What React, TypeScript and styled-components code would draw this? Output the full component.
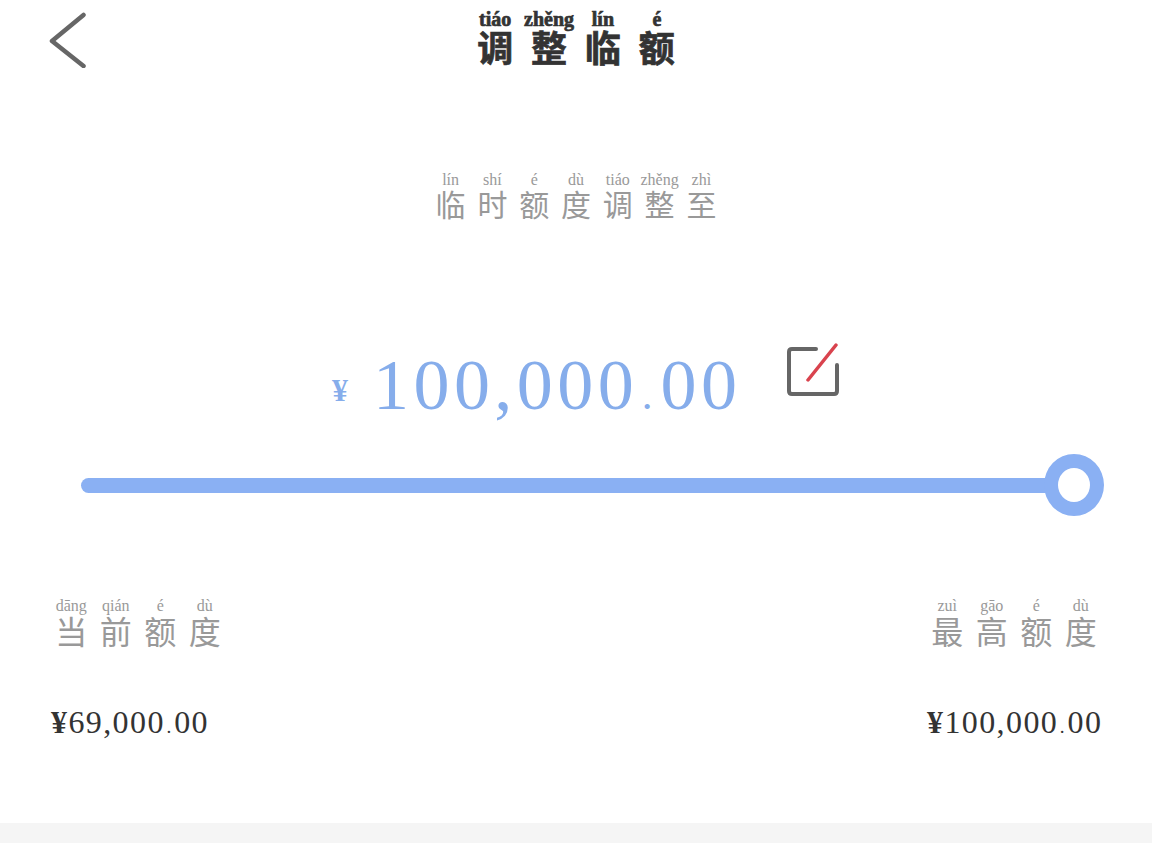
import React from 'react';
import styled, { createGlobalStyle } from 'styled-components';

const GlobalStyle = createGlobalStyle`
  html, body {
    margin: 0;
    padding: 0;
    background: #fff;
  }
`;

const Page = styled.div`
  width: 1152px;
  height: 843px;
  display: flex;
  flex-direction: column;
  overflow: hidden;
  font-family: "Liberation Serif", "Noto Sans CJK SC", serif;
`;

const Content = styled.div`
  height: 823px;
  flex: none;
  display: flex;
  flex-direction: column;
`;

const Footer = styled.div`
  flex: 1;
  background: #f5f5f5;
`;

const Header = styled.div`
  display: grid;
  grid-template-columns: 1fr auto 1fr;
  align-items: start;
  padding: 10px 48px 0;
  height: 160px;
  box-sizing: border-box;
`;

const BackIcon = styled.svg`
  width: 40px;
  height: 58px;
  display: block;
`;

interface RowProps {
  $pitch: number;
  $color: string;
  $pySize: number;
  $pyHeight: number;
  $hzSize: number;
  $bold?: boolean;
}

const PinyinRow = styled.div<RowProps>`
  display: grid;
  grid-auto-flow: column;
  grid-auto-columns: ${p => p.$pitch}px;
  justify-content: start;
  color: ${p => p.$color};
  font-weight: ${p => (p.$bold ? 700 : 400)};
  -webkit-text-stroke: ${p => (p.$bold ? '0.7px' : '0')} ${p => p.$color};
  --py-size: ${p => p.$pySize}px;
  --py-height: ${p => p.$pyHeight}px;
  --hz-size: ${p => p.$hzSize}px;
`;

const Syllable = styled.div`
  display: flex;
  flex-direction: column;
  align-items: center;
`;

const Pinyin = styled.span`
  font-size: var(--py-size);
  line-height: var(--py-height);
  height: var(--py-height);
  white-space: nowrap;
`;

const Hanzi = styled.span`
  font-size: var(--hz-size);
  line-height: var(--hz-size);
  font-family: "Noto Sans CJK SC", sans-serif;
`;

const SubtitleRow = styled.div`
  display: flex;
  justify-content: center;
  height: 160px;
  padding-top: 11px;
  box-sizing: border-box;
`;

const AmountRow = styled.div`
  height: 134px;
  display: flex;
  align-items: flex-start;
  padding-left: 332px;
  box-sizing: border-box;
`;

const Currency = styled.span`
  font-size: 32px;
  line-height: 36px;
  margin-top: 52px;
  width: 41px;
  color: #86adeb;
  font-weight: 700;
`;

const Amount = styled.span`
  font-size: 72px;
  line-height: 82px;
  letter-spacing: 4.45px;
  margin-top: 24px;
  color: #86adeb;
`;

// the decimal point is drawn smaller than the digits
const Dot = styled.span`
  font-size: 0.6em;
  padding: 0 0.083em;
`;

const EditIcon = styled.svg`
  width: 56px;
  height: 56px;
  margin: 23px 0 0 44px;
  display: block;
`;

const Slider = styled.div`
  display: flex;
  align-items: center;
  padding: 0 48px 0 81px;
  height: 62px;
`;

const Track = styled.div`
  flex: 1;
  height: 15px;
  margin-right: -4px;
  border-radius: 8px 0 0 8px;
  background: #8ab0f3;
`;

const Thumb = styled.div`
  width: 60px;
  height: 62px;
  box-sizing: border-box;
  border: 14px solid #8ab0f3;
  border-radius: 50%;
  background: #fff;
`;

const Summary = styled.div`
  display: flex;
  justify-content: space-between;
  padding: 82px 49px 0 51px;
`;

const SummaryColumn = styled.div`
  display: flex;
  flex-direction: column;
`;

const LabelWrap = styled.div`
  margin-left: -2px;
  height: 106px;
`;

const Money = styled.div`
  font-size: 32px;
  line-height: 36px;
  letter-spacing: 1.4px;
  color: #333;
`;

const Yen = styled.span`
  font-weight: 700;
`;

type Char = [string, string];

const TITLE: Char[] = [['tiáo', '调'], ['zhěng', '整'], ['lín', '临'], ['é', '额']];
const SUBTITLE: Char[] = [['lín', '临'], ['shí', '时'], ['é', '额'], ['dù', '度'], ['tiáo', '调'], ['zhěng', '整'], ['zhì', '至']];
const CURRENT: Char[] = [['dāng', '当'], ['qián', '前'], ['é', '额'], ['dù', '度']];
const MAX: Char[] = [['zuì', '最'], ['gāo', '高'], ['é', '额'], ['dù', '度']];

const renderChars = (chars: Char[]) =>
  chars.map(([py, hz], i) => (
    <Syllable key={i}>
      <Pinyin>{py}</Pinyin>
      <Hanzi>{hz}</Hanzi>
    </Syllable>
  ));

const App: React.FC = () => (
  <Page>
    <GlobalStyle />
    <Content>
      <Header>
        <BackIcon viewBox="0 0 40 58">
          <path d="M35.5 5 L4 31 L35.5 56" fill="none" stroke="#666" strokeWidth="4.5" strokeLinecap="round" strokeLinejoin="round" />
        </BackIcon>
        <PinyinRow $pitch={53.9} $color="#333" $pySize={20} $pyHeight={18} $hzSize={36} $bold>
          {renderChars(TITLE)}
        </PinyinRow>
        <div />
      </Header>
      <SubtitleRow>
        <PinyinRow $pitch={41.8} $color="#999" $pySize={16} $pyHeight={17} $hzSize={30}>
          {renderChars(SUBTITLE)}
        </PinyinRow>
      </SubtitleRow>
      <AmountRow>
        <Currency>¥</Currency>
        <Amount>100,000<Dot>.</Dot>00</Amount>
        <EditIcon viewBox="0 0 56 56">
          <path d="M31 6 H7 Q4 6 4 9 V48 Q4 51 7 51 H49 Q52 51 52 48 V22" fill="none" stroke="#666" strokeWidth="4" strokeLinecap="round" />
          <path d="M23 37 L51 2" fill="none" stroke="#d9434e" strokeWidth="3.5" strokeLinecap="round" />
        </EditIcon>
      </AmountRow>
      <Slider>
        <Track />
        <Thumb />
      </Slider>
      <Summary>
        <SummaryColumn>
          <LabelWrap>
            <PinyinRow $pitch={44.5} $color="#999" $pySize={16} $pyHeight={16} $hzSize={32}>
              {renderChars(CURRENT)}
            </PinyinRow>
          </LabelWrap>
          <Money><Yen>¥</Yen>69,000<Dot>.</Dot>00</Money>
        </SummaryColumn>
        <SummaryColumn>
          <LabelWrap>
            <PinyinRow $pitch={44.5} $color="#999" $pySize={16} $pyHeight={16} $hzSize={32}>
              {renderChars(MAX)}
            </PinyinRow>
          </LabelWrap>
          <Money><Yen>¥</Yen>100,000<Dot>.</Dot>00</Money>
        </SummaryColumn>
      </Summary>
    </Content>
    <Footer />
  </Page>
);

export default App;
